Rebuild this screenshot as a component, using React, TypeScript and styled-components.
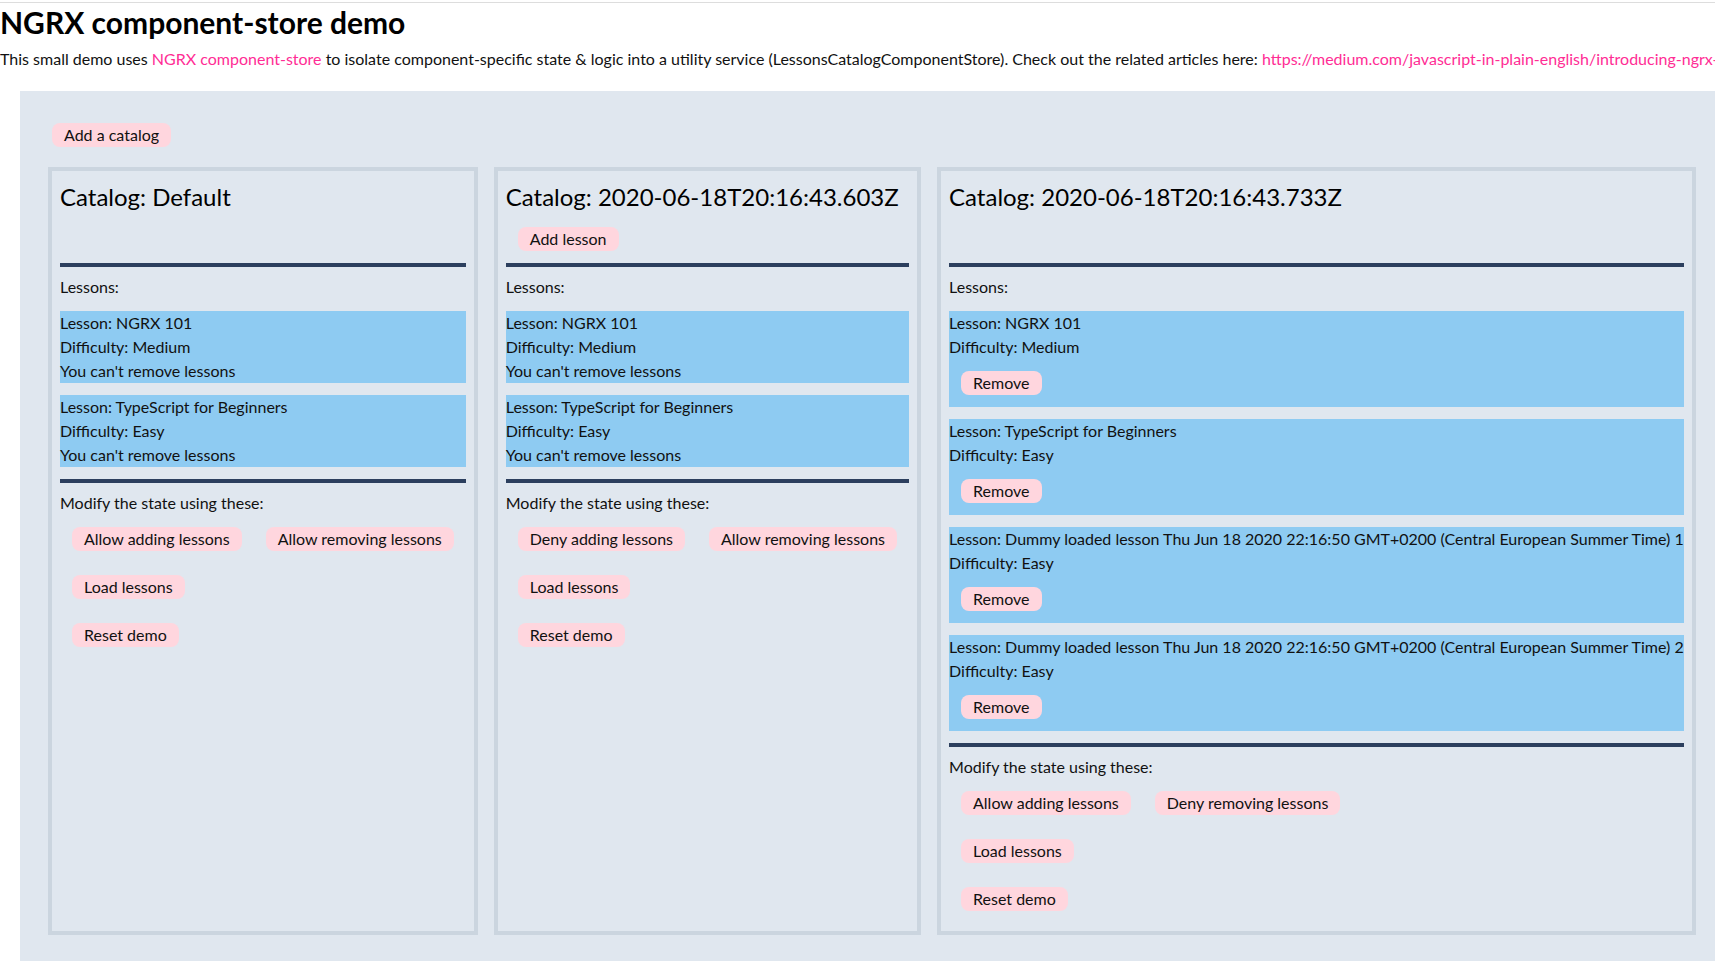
import React from "react";
import styled, { createGlobalStyle } from "styled-components";

const GlobalStyle = createGlobalStyle`
  html, body {
    margin: 0;
    padding: 0;
    overflow-x: hidden;
    background: #ffffff;
  }
  body {
    font-family: Lato, "Open Sans", "Liberation Sans", sans-serif;
    font-size: 16px;
    line-height: 24px;
    color: #111111;
  }
`;

const Page = styled.div`
  border-top: 1px solid #dddddd;
  margin-top: 2px;
  min-height: 958px;
  display: flex;
  flex-direction: column;
`;

const Title = styled.h1`
  margin: 0;
  font-size: 30px;
  line-height: 38px;
  font-weight: 700;
  color: #000000;
`;

const Intro = styled.p`
  margin: 6px 0 20px;
  white-space: nowrap;
  color: #111111;
`;

const Link = styled.a`
  color: #ff2d95;
  text-decoration: none;
`;

const Demo = styled.div`
  flex: 1;
  margin-left: 20px;
  padding: 20px;
  background: #e0e7ef;
`;

const Button = styled.button`
  display: inline-block;
  margin: 12px;
  padding: 0 12px;
  height: 24px;
  border: none;
  border-radius: 8px;
  background: #ffd6de;
  color: #111111;
  font-family: inherit;
  font-size: 16px;
  line-height: 24px;
  cursor: pointer;
`;

const Catalogs = styled.div`
  display: flex;
  flex-wrap: nowrap;
  align-items: stretch;
`;

const Catalog = styled.section`
  flex: none;
  margin: 8px;
  padding: 8px;
  border: 4px solid #cbd5df;
  display: flex;
  flex-direction: column;
`;

const CatalogHeader = styled.div`
  height: 84px;
`;

const CatalogTitle = styled.h2`
  margin: 0;
  font-size: 24px;
  line-height: 36px;
  font-weight: 400;
  color: #000000;
  white-space: nowrap;
`;

const Rule = styled.div`
  height: 4px;
  background: #2c3f5e;
`;

const Label = styled.div<{ $gap: number }>`
  margin: 8px 0 ${(p) => p.$gap}px;
`;

const Lesson = styled.div`
  background: #8ecbf2;
  margin-bottom: 12px;
  white-space: nowrap;
`;

const ButtonRow = styled.div`
  white-space: nowrap;
`;

type LessonData = { name: string; difficulty: string };

const baseLessons: LessonData[] = [
  { name: "NGRX 101", difficulty: "Medium" },
  { name: "TypeScript for Beginners", difficulty: "Easy" },
];

const loadedLessons: LessonData[] = [
  ...baseLessons,
  {
    name: "Dummy loaded lesson Thu Jun 18 2020 22:16:50 GMT+0200 (Central European Summer Time) 1",
    difficulty: "Easy",
  },
  {
    name: "Dummy loaded lesson Thu Jun 18 2020 22:16:50 GMT+0200 (Central European Summer Time) 2",
    difficulty: "Easy",
  },
];

type CatalogProps = {
  name: string;
  canAdd: boolean;
  canRemove: boolean;
  lessons: LessonData[];
};

const CatalogCard: React.FC<CatalogProps> = ({ name, canAdd, canRemove, lessons }) => (
  <Catalog>
    <CatalogHeader>
      <CatalogTitle>Catalog: {name}</CatalogTitle>
      {canAdd && <Button>Add lesson</Button>}
    </CatalogHeader>
    <Rule />
    <Label $gap={12}>Lessons:</Label>
    {lessons.map((l, i) => (
      <Lesson key={i}>
        <div>Lesson: {l.name}</div>
        <div>Difficulty: {l.difficulty}</div>
        {canRemove ? <Button>Remove</Button> : <div>You can't remove lessons</div>}
      </Lesson>
    ))}
    <Rule />
    <Label $gap={0}>Modify the state using these:</Label>
    <ButtonRow>
      <Button>{canAdd ? "Deny adding lessons" : "Allow adding lessons"}</Button>
      <Button>{canRemove ? "Deny removing lessons" : "Allow removing lessons"}</Button>
    </ButtonRow>
    <ButtonRow>
      <Button>Load lessons</Button>
    </ButtonRow>
    <ButtonRow>
      <Button>Reset demo</Button>
    </ButtonRow>
  </Catalog>
);

export default function App() {
  return (
    <>
      <GlobalStyle />
      <Page>
        <Title>NGRX component-store demo</Title>
        <Intro>
          This small demo uses <Link href="#">NGRX component-store</Link> to isolate
          component-specific state &amp; logic into a utility service
          (LessonsCatalogComponentStore). Check out the related articles here:{" "}
          <Link href="#">
            https://medium.com/javascript-in-plain-english/introducing-ngrx-component-store-3c8ab8c7f0e1
          </Link>
        </Intro>
        <Demo>
          <Button>Add a catalog</Button>
          <Catalogs>
            <CatalogCard name="Default" canAdd={false} canRemove={false} lessons={baseLessons} />
            <CatalogCard
              name="2020-06-18T20:16:43.603Z"
              canAdd={true}
              canRemove={false}
              lessons={baseLessons}
            />
            <CatalogCard
              name="2020-06-18T20:16:43.733Z"
              canAdd={false}
              canRemove={true}
              lessons={loadedLessons}
            />
          </Catalogs>
        </Demo>
      </Page>
    </>
  );
}
